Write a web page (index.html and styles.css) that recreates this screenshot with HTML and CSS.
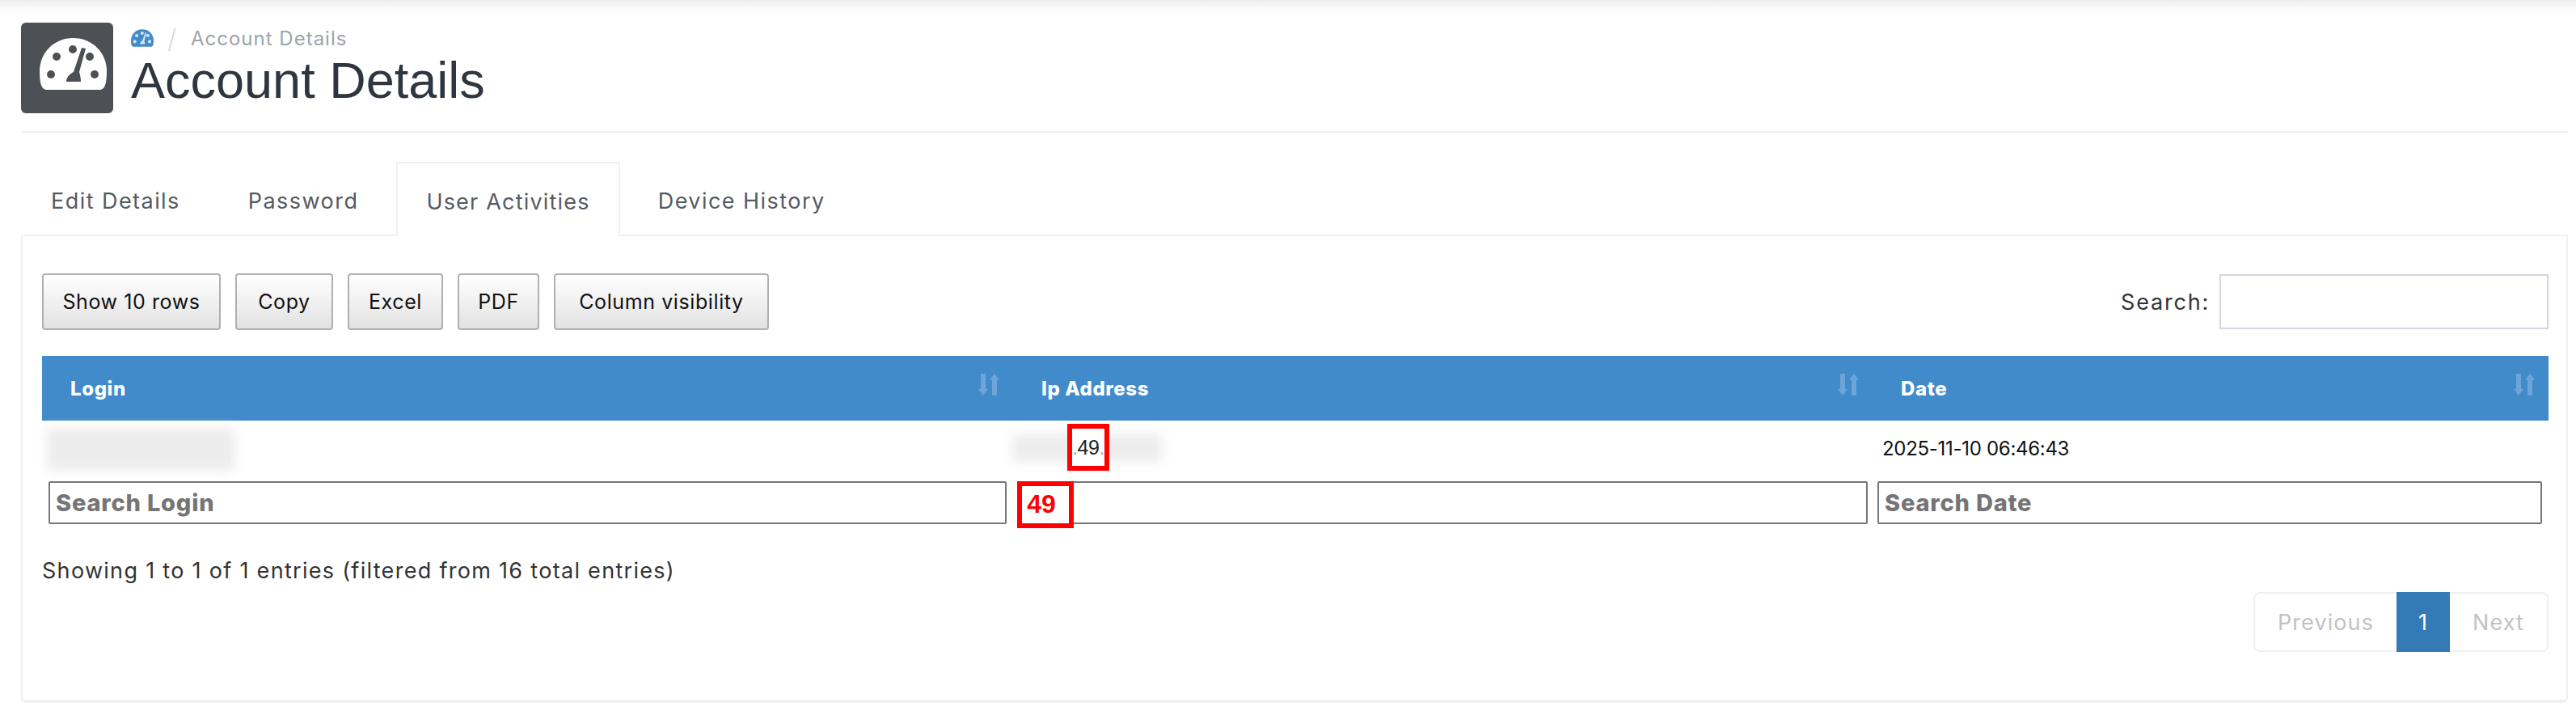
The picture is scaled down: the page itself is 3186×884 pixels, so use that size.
FILE: index.html
```html
<!DOCTYPE html>
<html lang="en">
<head>
<meta charset="utf-8">
<title>Account Details</title>
<link rel="stylesheet" href="styles.css">
</head>
<body>
<div class="page">
  <header class="page-head">
    <div class="head-icon">
      <svg viewBox="0 0 83 64" width="83" height="64"><path class="dial" d="M9 64C3 64 0 58 0 41 0 18 18 0 41.500 0S83 18 83 41c0 17-3 23-9 23Z"/><g class="dial-dots"><circle cx="14" cy="45" r="5"/><circle cx="21" cy="23" r="5"/><circle cx="41" cy="14" r="5"/><circle cx="62" cy="23" r="5"/><circle cx="68" cy="45" r="5"/><path d="M52 12 57 13 49 42C50 46 51 49 51 54H33C33 48 38 44 42 42Z"/></g></svg>
    </div>
    <div class="head-text">
      <div class="crumbs">
        <svg class="crumb-icon" viewBox="0 0 83 64" width="28" height="22"><path class="crumb-dial" d="M9 64C3 64 0 58 0 41 0 18 18 0 41.500 0S83 18 83 41c0 17-3 23-9 23Z"/><g class="crumb-marks"><circle cx="14" cy="45" r="6"/><circle cx="21" cy="23" r="6"/><circle cx="41" cy="14" r="6"/><circle cx="62" cy="23" r="6"/><circle cx="68" cy="45" r="6"/><path d="M52 12 57 13 49 42C50 46 51 49 51 54H33C33 48 38 44 42 42Z"/></g></svg>
        <span class="crumb-sep">/</span>
        <span class="crumb-text">Account Details</span>
      </div>
      <h1 class="title">Account Details</h1>
    </div>
  </header>

  <nav class="tabs">
    <a class="tab">Edit Details</a>
    <a class="tab">Password</a>
    <a class="tab tab-active">User Activities</a>
    <a class="tab">Device History</a>
  </nav>

  <section class="panel">
    <div class="toolbar">
      <div class="buttons">
        <button class="btn btn-rows">Show 10 rows</button>
        <button class="btn btn-copy">Copy</button>
        <button class="btn btn-excel">Excel</button>
        <button class="btn btn-pdf">PDF</button>
        <button class="btn btn-cols">Column visibility</button>
      </div>
      <label class="search">Search:<input class="search-input" type="text"></label>
    </div>

    <table class="grid">
      <colgroup><col class="c1"><col class="c2"><col class="c3"></colgroup>
      <thead>
        <tr>
          <th><span>Login</span><svg class="sort" viewBox="0 0 26 27" width="26" height="27"><path d="M3 0h6v19h3L6 27 0 19h3ZM20 0l6 8h-3v19h-6V8h-3Z"/></svg></th>
          <th><span>Ip Address</span><svg class="sort" viewBox="0 0 26 27" width="26" height="27"><path d="M3 0h6v19h3L6 27 0 19h3ZM20 0l6 8h-3v19h-6V8h-3Z"/></svg></th>
          <th><span>Date</span><svg class="sort" viewBox="0 0 26 27" width="26" height="27"><path d="M3 0h6v19h3L6 27 0 19h3ZM20 0l6 8h-3v19h-6V8h-3Z"/></svg></th>
        </tr>
      </thead>
      <tbody>
        <tr class="data-row">
          <td><div class="blur blur-login"></div></td>
          <td><div class="ip-cell"><div class="blur blur-ip"></div><span class="hit-box"><span class="dot">.</span>49<span class="dot">.</span></span></div></td>
          <td class="date-cell">2025-11-10 06:46:43</td>
        </tr>
        <tr class="filter-row">
          <td><input class="filter" placeholder="Search Login"></td>
          <td><div class="filter-wrap"><input class="filter"><span class="hit-box hit-red">49</span></div></td>
          <td><input class="filter" placeholder="Search Date"></td>
        </tr>
      </tbody>
    </table>

    <p class="info">Showing 1 to 1 of 1 entries (filtered from 16 total entries)</p>

    <div class="pager-row">
      <div class="pager">
        <a class="page-link">Previous</a>
        <a class="page-link page-current">1</a>
        <a class="page-link">Next</a>
      </div>
    </div>
  </section>
</div>
</body>
</html>
```

FILE: styles.css
```css
* { box-sizing: border-box; }
html, body { margin: 0; padding: 0; background: #fff; }
body {
  width: 3186px;
  height: 884px;
  overflow: hidden;
  font-family: "Inter", "Liberation Sans", sans-serif;
  color: #333;
}
.page {
  padding: 0 10px 0 26px;
  height: 884px;
  background: linear-gradient(#ececec 0, #fafafa 10px, #fff 18px);
}
.page-head {
  display: flex;
  gap: 22px;
  height: 164px;
  padding-top: 28px;
  border-bottom: 2px solid #f0f0f0;
}
.head-icon {
  width: 114px;
  height: 112px;
  background: #4d5055;
  border-radius: 6px;
  padding: 19px 0 0 23px;
}
.head-icon svg { display: block; }
.dial { fill: #fff; }
.dial-dots { fill: #4d5055; }
.crumb-dial { fill: #428bca; }
.crumb-marks { fill: #d5e5f3; }
.head-text { display: flex; flex-direction: column; }
.crumbs {
  display: flex;
  align-items: center;
  height: 32px;
  margin-top: 3px;
  font-size: 24px;
  letter-spacing: 1px;
  color: #a0a4a9;
}
.crumb-sep { width: 46px; text-align: center; font-size: 32px; font-weight: 200; color: #ccd; }
.title {
  margin: 3px 0 0;
  font-family: "Liberation Sans", Arial, sans-serif;
  font-weight: 400;
  font-size: 63px;
  line-height: 66px;
  color: #2f3640;
}
.tabs {
  display: flex;
  gap: 10px;
  height: 90px;
  margin-top: 36px;
}
.tab {
  display: flex;
  align-items: center;
  padding: 6px 37px 0;
  font-size: 27px;
  letter-spacing: 1.45px;
  color: #555b63;
  height: 90px;
}
.tab-active {
  background: #fff;
  border: 2px solid #f1f1f1;
  border-bottom: 0;
  height: 92px;
  padding: 4px 35px 0;
  letter-spacing: 1.2px;
  position: relative;
}
.panel {
  height: 579px;
  border: 2px solid #f1f1f1;
  border-bottom-width: 4px;
  border-radius: 0 0 6px 6px;
  padding: 46px 22px 0 24px;
  background: #fff;
}
.toolbar { display: flex; justify-content: space-between; height: 102px; }
.buttons { display: flex; gap: 18px; }
.btn {
  height: 70px;
  padding: 0;
  font-family: inherit;
  font-size: 25px;
  letter-spacing: 0.6px;
  color: #111;
  border: 2px solid #b0b0b0;
  border-radius: 4px;
  background: linear-gradient(#fff, #e2e2e2);
}
.btn-rows { width: 221px; }
.btn-copy { width: 121px; }
.btn-excel { width: 118px; }
.btn-pdf { width: 101px; }
.btn-cols { width: 266px; }
.search { display: flex; align-items: center; gap: 12px; height: 70px; font-size: 27px; letter-spacing: 1.8px; }
.search-input { width: 407px; height: 68px; border: 2px solid #d2d6de; background: #fff; }
.grid { width: 3100px; border-collapse: collapse; table-layout: fixed; }
.c1 { width: 1201px; }
.c2 { width: 1063px; }
.c3 { width: 836px; }
th {
  position: relative;
  height: 80px;
  padding: 0 0 0 35px;
  background: #428bca;
  color: #fff;
  text-align: left;
  font-size: 24px;
  letter-spacing: 0.6px;
  font-weight: 800;
}
.sort {
  position: absolute;
  right: 17px;
  top: 22px;
  fill: #6da5d8;
}
.data-row td { height: 74px; padding: 0; vertical-align: top; }
.blur { filter: blur(7px); background: #ececec; }
.blur-login { width: 232px; height: 52px; margin: 10px 0 0 6px; }
.ip-cell { position: relative; height: 74px; }
.blur-ip { position: absolute; left: 0; top: 17px; width: 184px; height: 34px; }
.hit-box {
  position: absolute;
  left: 67px;
  top: 4px;
  width: 52px;
  height: 58px;
  display: flex;
  align-items: center;
  justify-content: center;
  border: 6px solid #f00;
  background: #fff;
  font-family: "Liberation Sans", Arial, sans-serif;
  font-size: 25px;
  letter-spacing: -0.5px;
  white-space: nowrap;
  color: #222;
}
.dot { color: #aaa; }
.data-row .date-cell {
  padding: 19px 0 0 12px;
  font-size: 24px;
  letter-spacing: -0.3px;
  line-height: 32px;
  color: #111;
}
.filter-row td { padding: 0 6px; height: 54px; }
.filter-row td:first-child { padding: 0 8px; }
.filter-row td:nth-child(2) { padding: 0 6px 0 5px; }
.filter-row td:last-child { padding: 0 8px 0 6px; }
.filter {
  display: block;
  width: 100%;
  height: 53px;
  padding: 0 7px;
  border: 2px solid #767676;
  border-radius: 2px;
  font-family: inherit;
  font-size: 29px;
  letter-spacing: 0.8px;
  font-weight: 800;
}
.filter::placeholder { color: #757575; }
.filter-wrap { position: relative; }
.hit-red {
  left: 0;
  top: 0;
  width: 70px;
  height: 58px;
  padding-right: 10px;
  font-size: 32px;
  letter-spacing: 0;
  font-weight: 700;
  color: #f00;
}
.info { margin: 38px 0 0; font-size: 27px; letter-spacing: 1.3px; line-height: 40px; color: #333; }
.pager-row { display: flex; justify-content: flex-end; margin-top: 6px; }
.pager {
  display: flex;
  height: 74px;
  border: 2px solid #f0f0f0;
  border-radius: 8px;
}
.page-link {
  display: flex;
  align-items: center;
  justify-content: center;
  padding: 0 28px;
  font-size: 27px;
  letter-spacing: 1.1px;
  color: #c2c2c2;
}
.page-current {
  width: 66px;
  padding: 0;
  margin: -2px 0;
  background: #337ab7;
  color: #fff;
}
```
